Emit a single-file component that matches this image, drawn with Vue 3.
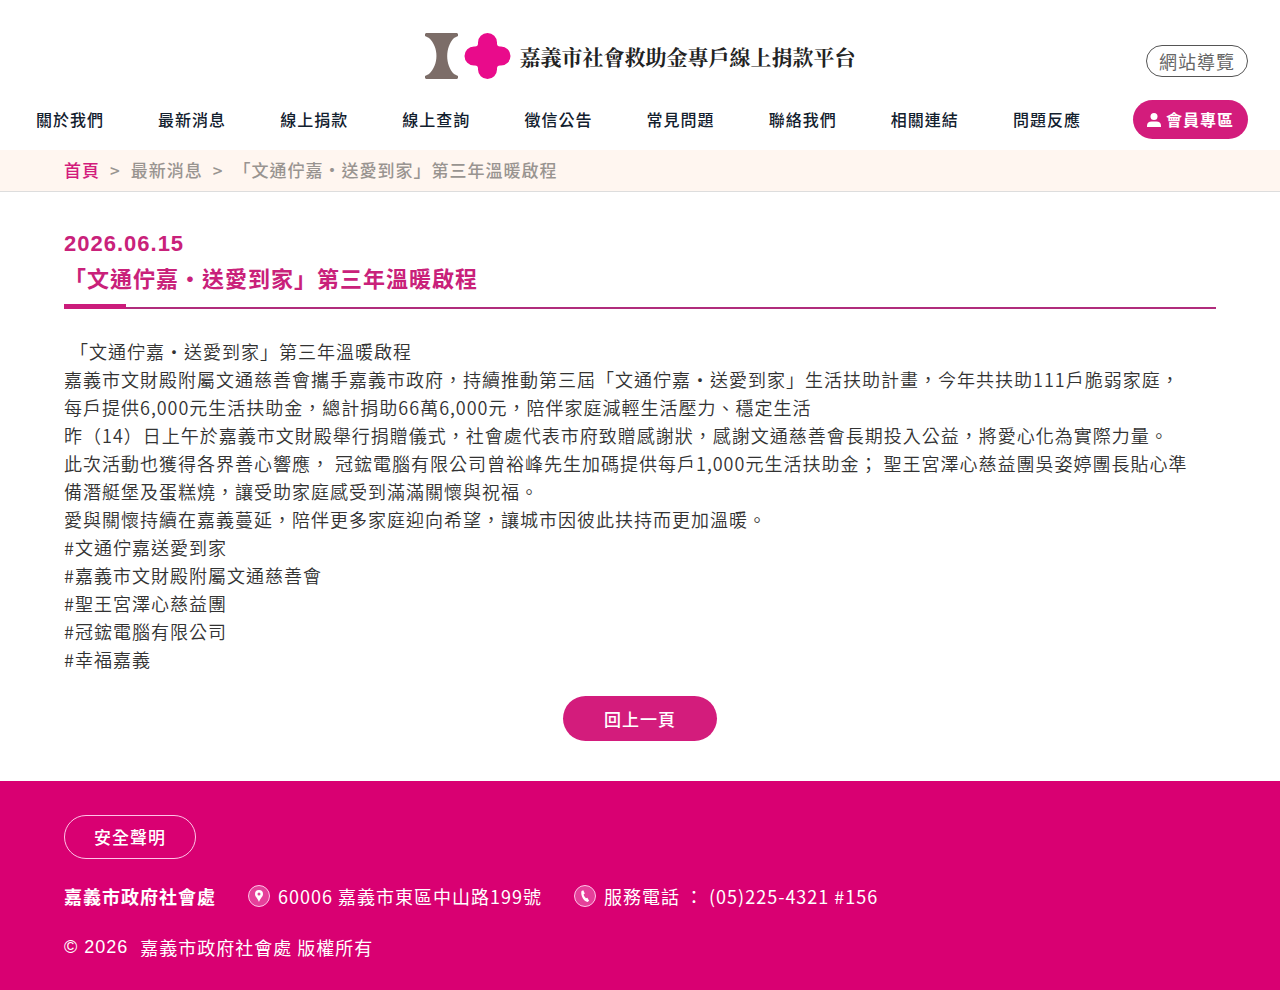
<script setup>
const navItems = ['關於我們', '最新消息', '線上捐款', '線上查詢', '徵信公告', '常見問題', '聯絡我們', '相關連結', '問題反應']

const lines = [
  '「文通佇嘉・送愛到家」第三年溫暖啟程',
  '嘉義市文財殿附屬文通慈善會攜手嘉義市政府，持續推動第三屆「文通佇嘉・送愛到家」生活扶助計畫，今年共扶助111戶脆弱家庭，每戶提供6,000元生活扶助金，總計捐助66萬6,000元，陪伴家庭減輕生活壓力、穩定生活',
  '昨（14）日上午於嘉義市文財殿舉行捐贈儀式，社會處代表市府致贈感謝狀，感謝文通慈善會長期投入公益，將愛心化為實際力量。',
  '此次活動也獲得各界善心響應， 冠鋐電腦有限公司曾裕峰先生加碼提供每戶1,000元生活扶助金； 聖王宮澤心慈益團吳姿婷團長貼心準備潛艇堡及蛋糕燒，讓受助家庭感受到滿滿關懷與祝福。',
  '愛與關懷持續在嘉義蔓延，陪伴更多家庭迎向希望，讓城市因彼此扶持而更加溫暖。',
  '#文通佇嘉送愛到家',
  '#嘉義市文財殿附屬文通慈善會',
  '#聖王宮澤心慈益團',
  '#冠鋐電腦有限公司',
  '#幸福嘉義',
]
</script>

<template>
  <div class="page">
    <header class="header">
      <div class="brand-row">
        <a href="#" class="brand">
          <svg class="brand-mark" viewBox="0 0 86 48" width="86" height="48" aria-hidden="true">
            <path d="M1 1h31l1 1v2l-4 2C20 15 20 33 29 42l4 2v2l-1 1H1l-1-1v-2l4-2C14 33 14 15 4 6L0 4V2z" fill="#7c6d68" />
            <path d="M62.500 1a9.500 9.500 0 0 1 9.500 9.500v1q0 3 3 3h1a9.500 9.500 0 0 1 0 19h-1q-3 0-3 3v1a9.500 9.500 0 0 1-19 0v-1q0-3-3-3h-1a9.500 9.500 0 0 1 0-19h1q3 0 3-3v-1a9.500 9.500 0 0 1 9.500-9.500z" fill="#e90b8b" />
          </svg>
          <span class="brand-name">嘉義市社會救助金專戶線上捐款平台</span>
        </a>
        <a href="#" class="sitemap">網站導覽</a>
      </div>
      <nav class="nav" aria-label="主選單">
        <ul class="nav-list">
          <li v-for="item in navItems" :key="item"><a href="#">{{ item }}</a></li>
        </ul>
        <a href="#" class="member">
          <svg viewBox="0 0 14 14" width="14" height="14" aria-hidden="true">
            <circle cx="7" cy="3.500" r="3.500" fill="currentColor" />
            <path d="M0 14v-1.500C0 10 2 8.500 4.500 8.500h5C12 8.500 14 10 14 12.500V14z" fill="currentColor" />
          </svg>
          <span>會員專區</span>
        </a>
      </nav>
    </header>

    <nav class="crumbs" aria-label="頁面路徑">
      <a href="#" class="home">首頁</a>
      <span>&gt;</span>
      <a href="#">最新消息</a>
      <span>&gt;</span>
      <span>「文通佇嘉・送愛到家」第三年溫暖啟程</span>
    </nav>

    <main class="main">
      <time class="date" datetime="2026-06-15">2026.06.15</time>
      <h1 class="title">「文通佇嘉・送愛到家」第三年溫暖啟程</h1>
      <div class="article">
        <p v-for="(line, i) in lines" :key="i" :class="{ lead: i === 0 }">{{ line }}</p>
      </div>
      <button type="button" class="back">回上一頁</button>
    </main>

    <footer class="footer">
      <a href="#" class="security">安全聲明</a>
      <address class="contact">
        <strong>嘉義市政府社會處</strong>
        <span class="contact-item">
          <svg viewBox="0 0 22 22" width="22" height="22" aria-hidden="true">
            <circle cx="11" cy="11" r="10.500" fill="#e5409a" stroke="#ffc4e8" />
            <path d="M11 5a4 4 0 0 0-4 4c0 2.800 2.700 4.200 4 8 1.300-3.800 4-5.200 4-8a4 4 0 0 0-4-4zm0 2.500a1.500 1.500 0 1 1 0 3 1.500 1.500 0 0 1 0-3z" fill="#fff" fill-rule="evenodd" />
          </svg>
          <span>60006 嘉義市東區中山路199號</span>
        </span>
        <span class="contact-item">
          <svg viewBox="0 0 22 22" width="22" height="22" aria-hidden="true">
            <circle cx="11" cy="11" r="10.500" fill="#e5409a" stroke="#ffc4e8" />
            <path d="M7.500 6l1.800-.8 1.500 3.300-1.200 1.100c.4 1.500 1.200 2.600 2.300 3.600l1.500-.5 1.700 3-1.500 1.200C9.800 16.500 6.300 10.500 7.500 6z" fill="#fff" />
          </svg>
          <span>服務電話 ： (05)225-4321 #156</span>
        </span>
      </address>
      <p class="copyright"><span class="year">© 2026</span><span>嘉義市政府社會處 版權所有</span></p>
    </footer>
  </div>
</template>

<style>
body {
  margin: 0;
  background: #fff;
}
</style>

<style scoped>
.page {
  min-height: 100vh;
  display: flex;
  flex-direction: column;
  font-family: "Noto Sans CJK TC", "Liberation Sans", sans-serif;
  font-size: 18px;
  letter-spacing: 1px;
  color: #333;
}

a {
  color: inherit;
  text-decoration: none;
}

.header {
  padding: 32px 32px 11px;
}

.brand-row {
  display: grid;
  grid-template-columns: 1fr auto 1fr;
  align-items: center;
}

.brand {
  grid-column: 2;
  display: flex;
  align-items: center;
  gap: 9px;
}

.brand-mark {
  display: block;
}

.brand-name {
  font-family: "Noto Serif CJK TC", "Noto Serif TC", "Noto Sans CJK TC", serif;
  font-size: 21px;
  line-height: 32px;
  letter-spacing: 0;
  font-weight: 700;
  color: #222;
}

.sitemap {
  justify-self: end;
  align-self: end;
  margin-bottom: 3px;
  padding: 0 12px;
  border: 1px solid #555;
  border-radius: 16px;
  line-height: 30px;
  color: #666;
}

.nav {
  display: flex;
  align-items: center;
  gap: 52px;
  margin-top: 20px;
  padding-left: 4px;
}

.nav-list {
  flex: 1;
  display: flex;
  justify-content: space-between;
  margin: 0;
  padding: 0 0 2px;
  list-style: none;
  font-size: 16px;
  font-weight: 500;
  color: #12202e;
}

.member {
  display: flex;
  align-items: center;
  gap: 5px;
  padding: 0 14px;
  border-radius: 20px;
  background: #d31c7c;
  color: #fff;
  font-size: 16px;
  font-weight: 700;
  line-height: 39px;
}

.crumbs {
  display: flex;
  gap: 10px;
  padding: 0 64px 2px;
  background: #fff6f0;
  border-bottom: 1px solid #ddd;
  font-size: 17px;
  font-weight: 500;
  line-height: 39px;
  color: #999490;
}

.home {
  color: #d31c7c;
}

.main {
  display: flex;
  flex-direction: column;
  padding: 36px 64px 40px;
}

.date {
  font-family: "Liberation Sans", sans-serif;
  font-size: 22px;
  font-weight: 700;
  line-height: 32px;
  color: #c9217a;
}

.title {
  position: relative;
  margin: 0;
  padding: 0 0 13px;
  border-bottom: 2px solid #b02c7c;
  font-size: 22px;
  font-weight: 700;
  line-height: 34px;
  color: #c9217a;
}

.title::after {
  content: "";
  position: absolute;
  left: 0;
  bottom: -2px;
  width: 62px;
  height: 5px;
  background: #cb1c7b;
}

.article {
  margin-top: 28px;
  padding-right: 20px;
  line-height: 28px;
  font-weight: 350;
}

.article p {
  margin: 0;
}

.article .lead {
  padding-left: 6px;
}

.back {
  align-self: center;
  margin-top: 23px;
  padding: 0 41px;
  border: 0;
  border-radius: 23px;
  background: #d31c7c;
  color: #fff;
  font: inherit;
  font-size: 17px;
  font-weight: 500;
  line-height: 45px;
  letter-spacing: 1px;
}

.footer {
  flex: 1;
  padding: 34px 64px 24px;
  background: #d90072;
  color: #fff;
}

.security {
  display: inline-block;
  padding: 0 29px;
  border: 1px solid #ffc4e8;
  border-radius: 22px;
  font-size: 17px;
  font-weight: 500;
  line-height: 42px;
}

.contact {
  display: flex;
  align-items: center;
  gap: 32px;
  margin-top: 20px;
  font-style: normal;
  line-height: 34px;
}

.contact-item {
  display: flex;
  align-items: center;
  gap: 8px;
}

.copyright {
  display: flex;
  gap: 12px;
  margin: 17px 0 0;
  line-height: 34px;
}

.year {
  font-family: "Liberation Sans", sans-serif;
}
</style>
